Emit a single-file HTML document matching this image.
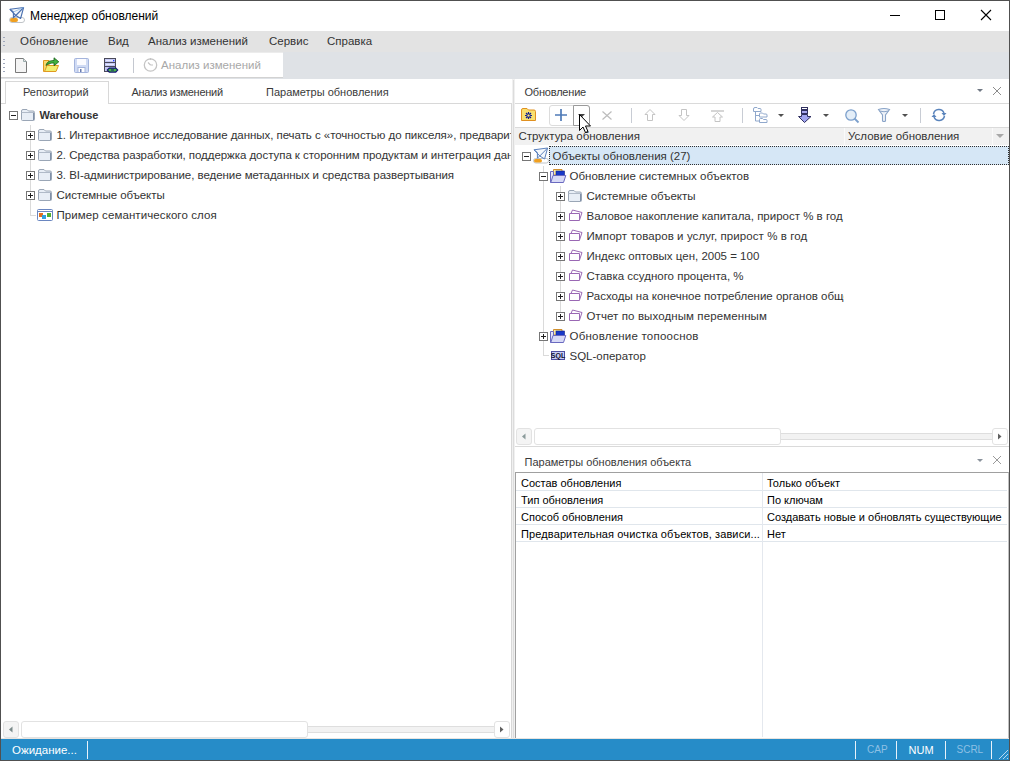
<!DOCTYPE html>
<html><head><meta charset="utf-8">
<style>
*{box-sizing:border-box;margin:0;padding:0}
html,body{width:1010px;height:761px;overflow:hidden;background:#fff}
body{font-family:"Liberation Sans",sans-serif;font-size:11.5px;color:#333;position:relative}
.a{position:absolute}
.t{position:absolute;white-space:nowrap;line-height:14px}
svg{position:absolute;overflow:visible}
.bx{position:absolute;width:9px;height:9px;border:1px solid #767676;background:#fff}
.bx:before{content:"";position:absolute;left:1px;top:3px;width:5px;height:1px;background:#202020}
.bx.p:after{content:"";position:absolute;left:3px;top:1px;width:1px;height:5px;background:#202020}
.vl{position:absolute;width:1px;background:#dadada}
.hl{position:absolute;height:1px;background:#dadada}
.g{color:#000;font-size:11px;letter-spacing:0}
.hd{font-size:11px;color:#3a3a3a}
</style></head><body>

<!-- ===== TITLE BAR ===== -->
<svg style="left:9px;top:7px" width="17" height="16" viewBox="0 0 17 16">
 <rect x="0.5" y="10.5" width="15" height="5" rx="2.5" fill="#fff" stroke="#c0c4c8"/>
 <rect x="1" y="11" width="8" height="4" rx="2" fill="#f0a020"/>
 <path d="M1 2.3 L14.6 0.5 L11.6 11.5 L6.8 8.5 Z" fill="#f4f8fc" stroke="#4a70b0" stroke-width="1.1" stroke-linejoin="round"/>
 <path d="M1 2.3 L4.4 5 V10.5 L6.8 8.5 M14.6 0.5 L6.8 8.5" fill="none" stroke="#4a70b0" stroke-width="1.1"/>
 <path d="M4.4 5 L14.6 0.5" stroke="#90b8e0" stroke-width="0.8"/>
</svg>
<div class="t" style="left:30px;top:9px;font-size:12px;color:#000">Менеджер обновлений</div>
<div class="a" style="left:890px;top:15px;width:10px;height:1px;background:#000"></div>
<div class="a" style="left:935px;top:10px;width:10px;height:10px;border:1px solid #000"></div>
<svg style="left:981px;top:10px" width="10" height="10" viewBox="0 0 10 10"><path d="M0 0 L10 10 M10 0 L0 10" stroke="#000" stroke-width="1.1"/></svg>

<!-- ===== MENU BAR ===== -->
<div class="a" style="left:1px;top:31px;width:1008px;height:21px;background:#e3e3e3"></div>
<div class="a" style="left:3px;top:37px;width:2px;height:9px;background:repeating-linear-gradient(#a0a8bc 0 1px,transparent 1px 4px)"></div>
<div class="t" style="left:20px;top:33.7px;letter-spacing:0.2px">Обновление</div>
<div class="t" style="left:108px;top:33.7px">Вид</div>
<div class="t" style="left:148px;top:33.7px">Анализ изменений</div>
<div class="t" style="left:269px;top:33.7px">Сервис</div>
<div class="t" style="left:327px;top:33.7px">Справка</div>

<!-- ===== TOOLBAR STRIP ===== -->
<div class="a" style="left:1px;top:52px;width:1008px;height:27px;background:#dfe2e6"></div>
<div class="a" style="left:1px;top:52px;width:282px;height:26px;background:#fff;border-top:1px solid #ececec;border-bottom:1px solid #d2d2d2"></div>
<div class="a" style="left:3px;top:59px;width:2px;height:13px;background:repeating-linear-gradient(#a0a8bc 0 1px,transparent 1px 4px)"></div>
<!-- new doc -->
<svg style="left:15px;top:58px" width="13" height="15" viewBox="0 0 13 15">
 <path d="M0.5 0.5 H8.5 L11.5 3.5 V14.5 H0.5 Z" fill="#f4f4f4" stroke="#7a7a7a"/>
 <path d="M8.5 0.5 V3.5 H11.5" fill="#e0e0e0" stroke="#9aa"/>
</svg>
<!-- open -->
<svg style="left:43px;top:57px" width="17" height="16" viewBox="0 0 17 16">
 <path d="M0.5 3.5 H6 V14.5 H0.5 Z" fill="#f6d870" stroke="#e09a20"/>
 <path d="M1.5 14.5 L4 8.5 H15.5 L13 14.5 Z" fill="#f0ee70" stroke="#e09a20"/>
 <path d="M3 8.5 C4 4 8 3.5 11 3.5 V0.8 L15.8 4.8 L11 8.8 V6 C8 6 5.5 6.5 3 8.5 Z" fill="#40b040" stroke="#186018" stroke-width="0.8"/>
</svg>
<!-- save -->
<svg style="left:74px;top:58px" width="15" height="15" viewBox="0 0 15 15">
 <path d="M0.5 1.5 Q0.5 0.5 1.5 0.5 H13.5 Q14.5 0.5 14.5 1.5 V13.5 Q14.5 14.5 13.5 14.5 H1.5 Q0.5 14.5 0.5 13.5 Z" fill="#d0dbf4" stroke="#a4b4dc"/>
 <rect x="3" y="1" width="9" height="6" fill="#fbfbff"/>
 <rect x="4" y="9.5" width="7" height="5" fill="#fff" stroke="#a4b4dc"/>
 <rect x="6" y="11" width="1.5" height="3" fill="#6a7cb0"/>
</svg>
<!-- save db -->
<svg style="left:104px;top:58px" width="15" height="16" viewBox="0 0 15 16">
 <rect x="0.5" y="0.5" width="11" height="13" fill="#c4c8f4" stroke="#4a4a5a"/>
 <path d="M1 4.5 H11 M1 8.5 H11" stroke="#4a4a5a"/>
 <path d="M2 2.5 H9 M2 6.5 H10" stroke="#e8eaff" stroke-width="1"/>
 <rect x="9" y="2" width="1.3" height="1.3" fill="#2040ff"/>
 <path d="M5 9.5 H12 L14.5 12 L12 14.8 H5 L2.5 12 Z" fill="#101070"/>
 <path d="M5.5 10.8 H11.5 L13 12 L11.5 13.5 H5.5 L4 12 Z" fill="#48b848"/>
 <path d="M7 12 H10" stroke="#101070" stroke-width="1"/>
</svg>
<div class="a" style="left:133px;top:58px;width:1px;height:15px;background:#c4c8d0"></div>
<!-- clock -->
<svg style="left:143px;top:57px" width="15" height="15" viewBox="0 0 15 15">
 <circle cx="7.5" cy="8" r="6.2" fill="none" stroke="#c4c4c4" stroke-width="1.3"/>
 <path d="M7.5 1 V3 M7.5 8 L5 5.5 M7.5 8 L10 8" stroke="#c4c4c4" stroke-width="1.2" fill="none"/>
</svg>
<div class="t" style="left:161px;top:58px;color:#a8a8a8">Анализ изменений</div>

<!-- ===== LEFT PANEL ===== -->
<div class="a" style="left:5px;top:81px;width:104px;height:23px;border:1px solid #d8d8d8;border-bottom:none;background:#fff"></div>
<div class="a" style="left:108px;top:103px;width:404px;height:1px;background:#d8d8d8"></div>
<div class="a" style="left:1px;top:103px;width:4px;height:1px;background:#d8d8d8"></div>
<div class="a" style="left:511px;top:103px;width:1px;height:636px;background:#d8d8d8"></div>
<div class="t hd" style="left:23px;top:85px">Репозиторий</div>
<div class="t hd" style="left:131.5px;top:85px;letter-spacing:-0.27px">Анализ изменений</div>
<div class="t hd" style="left:266px;top:85px">Параметры обновления</div>

<!-- left tree -->
<div class="vl" style="left:30px;top:125px;height:91px"></div>
<div class="hl" style="left:30px;top:215px;width:6px"></div>
<div class="bx" style="left:9px;top:111px"></div>
<div class="bx p" style="left:26px;top:131px"></div>
<div class="bx p" style="left:26px;top:151px"></div>
<div class="bx p" style="left:26px;top:171px"></div>
<div class="bx p" style="left:26px;top:191px"></div>
<svg width="0" height="0" style="left:0;top:0"><defs>
 <g id="fgray">
  <path d="M0.5 2 Q0.5 0.5 2 0.5 H6 L7.5 2 H12 Q13.5 2 13.5 3.5 V10.5 Q13.5 11.5 12.5 11.5 H1.5 Q0.5 11.5 0.5 10.5 Z" fill="#e8eef6" stroke="#9aa6b6"/>
  <path d="M0.5 3.5 H13.5" stroke="#b0bac8"/>
  <path d="M12.5 4 V11" stroke="#8090a8"/>
 </g>
 <g id="fpur">
  <path d="M3 4.5 L4.5 1 L14 3.5 L11.5 11" fill="none" stroke="#9a68b4"/>
  <path d="M1.5 4.5 H11.5 V11.5 H1.5 Z" fill="#fff" stroke="#9a68b4"/>
 </g>
 <g id="fopen">
  <path d="M3.5 0.5 H12 V6 H3.5 Z" fill="#f8e8a0" stroke="#d09030"/>
  <rect x="6" y="2" width="8.5" height="5" fill="#1838c8" stroke="#102080" stroke-width="0.6"/>
  <path d="M0.5 2.5 H3.5 V13.5 H0.5 Z" fill="#e4e4f8" stroke="#6a6ac0"/>
  <path d="M0.8 13.5 L3 6.5 H15.8 L13.5 13.5 Z" fill="#d8daf6" stroke="#6a6ac0"/>
 </g>
</defs></svg>
<svg style="left:21px;top:109px" width="14" height="12"><use href="#fgray"/></svg>
<svg style="left:38px;top:129px" width="14" height="12"><use href="#fgray"/></svg>
<svg style="left:38px;top:149px" width="14" height="12"><use href="#fgray"/></svg>
<svg style="left:38px;top:169px" width="14" height="12"><use href="#fgray"/></svg>
<svg style="left:38px;top:189px" width="14" height="12"><use href="#fgray"/></svg>
<!-- semantic layer icon -->
<svg style="left:37px;top:209px" width="16" height="12" viewBox="0 0 16 12">
 <rect x="0.5" y="0.5" width="15" height="11" rx="1" fill="#fff" stroke="#6a86c0"/>
 <path d="M0.5 2.5 H15.5" stroke="#6a86c0"/>
 <rect x="2" y="4" width="4" height="4" fill="#e07020"/>
 <rect x="5" y="6" width="4" height="4" fill="#30a0e0"/>
 <rect x="10" y="4" width="4" height="4" fill="#50b030"/>
</svg>
<div class="t" style="left:39.5px;top:107.5px;font-weight:bold;font-size:11px">Warehouse</div>
<div class="a" style="left:0;top:120px;width:511px;height:110px;overflow:hidden;letter-spacing:-0.05px">
 <div class="t" style="left:56.5px;top:8px">1. Интерактивное исследование данных, печать с «точностью до пикселя», предварительный</div>
 <div class="t" style="left:56.5px;top:28px">2. Средства разработки, поддержка доступа к сторонним продуктам и интеграция данных</div>
 <div class="t" style="left:56.5px;top:48px">3. BI-администрирование, ведение метаданных и средства развертывания</div>
 <div class="t" style="left:56.5px;top:68px">Системные объекты</div>
 <div class="t" style="left:56.5px;top:88px;letter-spacing:0.09px">Пример семантического слоя</div>
</div>

<!-- left h-scrollbar -->
<div class="a" style="left:3px;top:721px;width:16px;height:17px;border:1px solid #e2e2e2;border-radius:3px;background:#f4f4f4"></div>
<svg style="left:8.5px;top:726px" width="4" height="7"><path d="M3.5 0.5 V6.5 L0 3.5 Z" fill="#7a8a8a"/></svg>
<div class="a" style="left:21px;top:721px;width:287px;height:17px;border:1px solid #e2e2e2;border-radius:3px;background:#fff"></div>
<div class="a" style="left:308px;top:726px;width:186px;height:7px;background:#f2f2f2;border-top:1px solid #dedede;border-bottom:1px solid #dedede"></div>
<div class="a" style="left:494px;top:721px;width:16px;height:17px;border:1px solid #e2e2e2;border-radius:3px;background:#fff"></div>
<svg style="left:500px;top:726px" width="4" height="7"><path d="M0 0.5 V6.5 L3.5 3.5 Z" fill="#606060"/></svg>

<!-- ===== SPLITTER ===== -->
<div class="a" style="left:512px;top:79px;width:3px;height:660px;background:#f0f0f0"></div>
<div class="a" style="left:513px;top:80px;width:1px;height:659px;background:#dcdcdc"></div>

<!-- ===== RIGHT TOP PANEL ===== -->
<div class="t hd" style="left:524.5px;top:85px;letter-spacing:-0.2px">Обновление</div>
<svg style="left:977px;top:89px" width="6" height="3"><path d="M0 0 H6 L3 3 Z" fill="#707884"/></svg>
<svg style="left:993px;top:87px" width="8" height="8" viewBox="0 0 8 8"><path d="M0 0 L8 8 M8 0 L0 8" stroke="#8c8c8c" stroke-width="1"/></svg>
<div class="a" style="left:515px;top:103px;width:494px;height:1px;background:#dadada"></div>
<!-- toolbar -->
<svg style="left:521px;top:108px" width="15" height="13" viewBox="0 0 15 13">
 <path d="M0.5 2 Q0.5 0.5 2 0.5 H6 L7.5 2 H13 Q14.5 2 14.5 3.5 V12.5 H0.5 Z" fill="#f8e070" stroke="#e09020"/>
 <path d="M7.5 4 V11 M4 7.5 H11 M5 5 L10 10 M10 5 L5 10" stroke="#102090" stroke-width="1.2"/>
 <circle cx="7.5" cy="7.5" r="1.6" fill="#f8e070" stroke="#102090" stroke-width="0.8"/>
</svg>
<div class="a" style="left:549px;top:105px;width:41px;height:21px;border:1px solid #dcdcdc;border-radius:3px;background:#fff"></div>
<div class="a" style="left:573px;top:105px;width:17px;height:21px;border:1px solid #9a9a9a;border-radius:0 3px 3px 0;background:#fff"></div>
<svg style="left:555px;top:109px" width="12" height="12"><path d="M6 0 V12 M0 6 H12" stroke="#4f7bb8" stroke-width="1.7"/></svg>
<svg style="left:578px;top:114px" width="7" height="4"><path d="M0 0 H7 L3.5 3.5 Z" fill="#404040"/></svg>
<svg style="left:602px;top:111px" width="10" height="9"><path d="M0.5 0.5 L9.5 8.5 M9.5 0.5 L0.5 8.5" stroke="#bcbcbc" stroke-width="1.2"/></svg>
<div class="a" style="left:631px;top:108px;width:1px;height:15px;background:#c8ccd4"></div>
<svg style="left:644px;top:109px" width="12" height="12" viewBox="0 0 12 12"><path d="M6 0.5 L11 5.5 H8.5 V11.5 H3.5 V5.5 H1 Z" fill="#fff" stroke="#c4c4c4"/></svg>
<svg style="left:678px;top:109px" width="12" height="12" viewBox="0 0 12 12"><path d="M6 11.5 L11 6.5 H8.5 V0.5 H3.5 V6.5 H1 Z" fill="#fff" stroke="#c4c4c4"/></svg>
<svg style="left:711px;top:110px" width="13" height="12" viewBox="0 0 13 12"><path d="M0 1 H13" stroke="#c4c4c4" stroke-width="1.4"/><path d="M6.5 2.5 L11.5 7 H9 V11.5 H4 V7 H1.5 Z" fill="#fff" stroke="#c4c4c4"/></svg>
<div class="a" style="left:742px;top:108px;width:1px;height:15px;background:#c8ccd4"></div>
<svg style="left:753px;top:107px" width="15" height="16" viewBox="0 0 15 16">
 <g fill="#fff" stroke="#90a8cc">
 <path d="M0.5 2 Q0.5 0.5 2 0.5 H4 L5 1.5 H7 Q8 1.5 8 2.5 V4.5 H0.5 Z"/>
 <path d="M6.5 7 Q6.5 6 7.5 6 H9.5 L10.5 7 H13 Q14 7 14 8 V10 H6.5 Z"/>
 <path d="M6.5 12.5 Q6.5 11.5 7.5 11.5 H9.5 L10.5 12.5 H13 Q14 12.5 14 13.5 V15.5 H6.5 Z"/>
 </g>
 <path d="M2.5 4.5 V14 H6 M2.5 8.5 H6" fill="none" stroke="#90a8cc"/>
</svg>
<svg style="left:778px;top:114px" width="6" height="3"><path d="M0 0 H6 L3 3 Z" fill="#505050"/></svg>
<svg style="left:798px;top:107px" width="14" height="16" viewBox="0 0 14 16">
 <rect x="3.5" y="0.5" width="6" height="2" fill="#fff" stroke="#303060"/>
 <rect x="3.5" y="3.5" width="6" height="3" fill="#a8a8f0" stroke="#303060"/>
 <path d="M3.5 7.5 H9.5 V9.5 H13 L6.5 15.5 L0.5 9.5 H3.5 Z" fill="#a0a4f0" stroke="#303060"/>
</svg>
<svg style="left:823px;top:114px" width="6" height="3"><path d="M0 0 H6 L3 3 Z" fill="#505050"/></svg>
<svg style="left:845px;top:109px" width="15" height="14" viewBox="0 0 15 14">
 <circle cx="6" cy="6" r="5.2" fill="#e4eef8" stroke="#7ca0cc" stroke-width="1.3"/>
 <path d="M9.5 9.5 L13.5 13.5" stroke="#7ca0cc" stroke-width="1.8"/>
</svg>
<svg style="left:878px;top:108px" width="12" height="14" viewBox="0 0 12 14">
 <path d="M0.5 1.5 Q6 -0.5 11.5 1.5 L7.5 7 V13 Q6 14 4.5 13 V7 Z" fill="#eef2f8" stroke="#8aa4c8" stroke-width="1.1"/>
 <path d="M1.5 3 Q6 4.5 10.5 3" fill="none" stroke="#8aa4c8"/>
</svg>
<svg style="left:902px;top:114px" width="6" height="3"><path d="M0 0 H6 L3 3 Z" fill="#505050"/></svg>
<div class="a" style="left:920px;top:108px;width:1px;height:15px;background:#c8ccd4"></div>
<svg style="left:931px;top:108px" width="16" height="14" viewBox="0 0 16 14">
 <path d="M2.5 6 A5.5 5.5 0 0 1 13 5" fill="none" stroke="#5a84bc" stroke-width="1.5"/>
 <path d="M13.5 8 A5.5 5.5 0 0 1 3 9" fill="none" stroke="#5a84bc" stroke-width="1.5"/>
 <path d="M10.5 5 H15.5 L13 8 Z" fill="#5a84bc"/>
 <path d="M0.5 9 H5.5 L3 6 Z" fill="#5a84bc"/>
</svg>
<div class="a" style="left:515px;top:127px;width:494px;height:1px;background:#dadada"></div>
<!-- column header -->
<div class="a" style="left:515px;top:128px;width:494px;height:17px;background:#f1f1f1"></div>
<div class="a" style="left:844px;top:128px;width:1px;height:17px;background:#fafafa"></div>
<div class="a" style="left:992px;top:128px;width:1px;height:17px;background:#fafafa"></div>
<div class="t" style="left:518.5px;top:129px">Структура обновления</div>
<div class="t" style="left:848px;top:129px">Условие обновления</div>
<svg style="left:996px;top:134px" width="8" height="4"><path d="M0 0 H8 L4 4 Z" fill="#a8a8a8"/></svg>

<!-- right tree -->
<div class="a" style="left:549px;top:146px;width:460px;height:19px;background:#d6e7f6;border:1px dotted #303030"></div>
<div class="vl" style="left:543px;top:166px;height:190px"></div>
<div class="hl" style="left:543px;top:355px;width:6px"></div>
<div class="vl" style="left:560px;top:186px;height:130px"></div>
<div class="bx" style="left:522px;top:152px"></div>
<div class="bx" style="left:539px;top:172px"></div>
<div class="bx p" style="left:556px;top:192px"></div>
<div class="bx p" style="left:556px;top:212px"></div>
<div class="bx p" style="left:556px;top:232px"></div>
<div class="bx p" style="left:556px;top:252px"></div>
<div class="bx p" style="left:556px;top:272px"></div>
<div class="bx p" style="left:556px;top:292px"></div>
<div class="bx p" style="left:556px;top:312px"></div>
<div class="bx p" style="left:539px;top:332px"></div>
<!-- root icon -->
<svg style="left:533px;top:147px" width="17" height="17" viewBox="0 0 17 16">
 <rect x="0.5" y="11" width="15" height="4.5" rx="2.2" fill="#fff" stroke="#c0c4c8"/>
 <rect x="1" y="11.5" width="8" height="3.5" rx="1.7" fill="#f0a020"/>
 <path d="M1 2.3 L14.6 0.5 L11.6 11.5 L6.8 8.5 Z" fill="#f4f8fc" stroke="#5a80bc" stroke-width="1" stroke-linejoin="round"/>
 <path d="M1 2.3 L4.4 5 V10.5 L6.8 8.5 M14.6 0.5 L6.8 8.5" fill="none" stroke="#5a80bc" stroke-width="1"/>
</svg>
<svg style="left:550px;top:169px" width="17" height="14"><use href="#fopen"/></svg>
<svg style="left:550px;top:329px" width="17" height="14"><use href="#fopen"/></svg>
<svg style="left:568px;top:190px" width="14" height="12"><use href="#fgray"/></svg>
<svg style="left:568px;top:209px" width="14" height="12"><use href="#fpur"/></svg>
<svg style="left:568px;top:229px" width="14" height="12"><use href="#fpur"/></svg>
<svg style="left:568px;top:249px" width="14" height="12"><use href="#fpur"/></svg>
<svg style="left:568px;top:269px" width="14" height="12"><use href="#fpur"/></svg>
<svg style="left:568px;top:289px" width="14" height="12"><use href="#fpur"/></svg>
<svg style="left:568px;top:309px" width="14" height="12"><use href="#fpur"/></svg>
<svg style="left:551px;top:351px" width="14" height="9" viewBox="0 0 14 9">
 <rect x="0.5" y="0.5" width="13" height="8" fill="#c8ccf4" stroke="#5050a0"/>
 <text x="7" y="7" font-family="Liberation Sans" font-size="7" font-weight="bold" text-anchor="middle" fill="#101030">SQL</text>
</svg>
<div class="t" style="left:552.5px;top:149px">Объекты обновления (27)</div>
<div class="t" style="left:569.5px;top:169px">Обновление системных объектов</div>
<div class="a" style="left:569px;top:186px;width:275px;height:140px;overflow:hidden">
 <div class="t" style="left:17.5px;top:3px">Системные объекты</div>
 <div class="t" style="left:17.5px;top:23px">Валовое накопление капитала, прирост % в год</div>
 <div class="t" style="left:17.5px;top:43px;letter-spacing:0.08px">Импорт товаров и услуг, прирост % в год</div>
 <div class="t" style="left:17.5px;top:63px">Индекс оптовых цен, 2005 = 100</div>
 <div class="t" style="left:17.5px;top:83px">Ставка ссудного процента, %</div>
 <div class="t" style="left:17.5px;top:103px">Расходы на конечное потребление органов общего управления</div>
 <div class="t" style="left:17.5px;top:123px;letter-spacing:0.1px">Отчет по выходным переменным</div>
</div>
<div class="t" style="left:569.5px;top:329px;letter-spacing:0.22px">Обновление топооснов</div>
<div class="t" style="left:569.5px;top:349px">SQL-оператор</div>

<!-- right h-scrollbar -->
<div class="a" style="left:516px;top:428px;width:16px;height:17px;border:1px solid #e2e2e2;border-radius:3px;background:#f4f4f4"></div>
<svg style="left:521.5px;top:433px" width="4" height="7"><path d="M3.5 0.5 V6.5 L0 3.5 Z" fill="#8a9a9a"/></svg>
<div class="a" style="left:534px;top:428px;width:247px;height:17px;border:1px solid #e2e2e2;border-radius:3px;background:#fff"></div>
<div class="a" style="left:781px;top:433px;width:211px;height:7px;background:#f2f2f2;border-top:1px solid #dedede;border-bottom:1px solid #dedede"></div>
<div class="a" style="left:992px;top:428px;width:16px;height:17px;border:1px solid #e2e2e2;border-radius:3px;background:#fff"></div>
<svg style="left:998px;top:433px" width="4" height="7"><path d="M0 0.5 V6.5 L3.5 3.5 Z" fill="#606060"/></svg>
<div class="a" style="left:515px;top:446px;width:494px;height:1px;background:#dadada"></div>

<!-- ===== RIGHT BOTTOM PANEL ===== -->
<div class="t hd" style="left:524.5px;top:454.5px">Параметры обновления объекта</div>
<svg style="left:977px;top:459px" width="6" height="3"><path d="M0 0 H6 L3 3 Z" fill="#8a929c"/></svg>
<svg style="left:993px;top:456px" width="8" height="8" viewBox="0 0 8 8"><path d="M0 0 L8 8 M8 0 L0 8" stroke="#9a9a9a" stroke-width="1"/></svg>
<div class="a" style="left:515px;top:472px;width:494px;height:267px;border-top:1px solid #a0a0a0;border-left:1px solid #a0a0a0;border-right:1px solid #c0c0c0"></div>
<div class="hl" style="left:516px;top:490px;width:491px;background:#e0e6ec"></div>
<div class="hl" style="left:516px;top:507px;width:491px;background:#e0e6ec"></div>
<div class="hl" style="left:516px;top:524px;width:491px;background:#e0e6ec"></div>
<div class="hl" style="left:516px;top:541px;width:491px;background:#e0e6ec"></div>
<div class="vl" style="left:762px;top:473px;height:264px;background:#e4e8ee"></div>
<div class="t g" style="left:521px;top:476px">Состав обновления</div>
<div class="t g" style="left:521px;top:493px">Тип обновления</div>
<div class="t g" style="left:521px;top:510px">Способ обновления</div>
<div class="t g" style="left:521px;top:527px;letter-spacing:0.12px">Предварительная очистка объектов, зависи...</div>
<div class="t g" style="left:767px;top:476px">Только объект</div>
<div class="t g" style="left:767px;top:493px">По ключам</div>
<div class="t g" style="left:767px;top:510px">Создавать новые и обновлять существующие</div>
<div class="t g" style="left:767px;top:527px">Нет</div>

<!-- cursor -->
<svg style="left:579px;top:114px" width="14" height="20" viewBox="0 0 14 20">
 <path d="M0.5 0.5 V16.5 L4 13 L6.5 18.5 L9 17.5 L6.5 12 H11.5 Z" fill="#fff" stroke="#000" stroke-width="1" stroke-linejoin="miter"/>
</svg>

<!-- ===== STATUS BAR ===== -->
<div class="a" style="left:1px;top:738px;width:1008px;height:1px;background:#e8e4e0"></div>
<div class="a" style="left:1px;top:739px;width:1008px;height:21px;background:#268cc8"></div>
<div class="t" style="left:12px;top:742.5px;color:#fff">Ожидание...</div>
<div class="a" style="left:87px;top:741px;width:1px;height:18px;background:#e8f2fa"></div>
<div class="a" style="left:855px;top:741px;width:1px;height:18px;background:#e8f2fa"></div>
<div class="a" style="left:896px;top:741px;width:1px;height:18px;background:#e8f2fa"></div>
<div class="a" style="left:945px;top:741px;width:1px;height:18px;background:#e8f2fa"></div>
<div class="a" style="left:991px;top:741px;width:1px;height:18px;background:#e8f2fa"></div>
<div class="t" style="left:867px;top:743px;color:#8ec0e4;font-size:10px">CAP</div>
<div class="t" style="left:908.5px;top:742.5px;color:#fff;font-size:11px;letter-spacing:0.1px">NUM</div>
<div class="t" style="left:956.5px;top:743px;color:#8ec0e4;font-size:10px">SCRL</div>
<svg style="left:998px;top:748px" width="11" height="12"><path d="M10 2 L1 11 M10 6 L5 11 M10 10 L9 11" stroke="#b8d8f0" stroke-width="1"/></svg>

<!-- window border -->
<div class="a" style="left:0;top:0;width:1010px;height:761px;border:1px solid #505050;pointer-events:none"></div>
</body></html>
